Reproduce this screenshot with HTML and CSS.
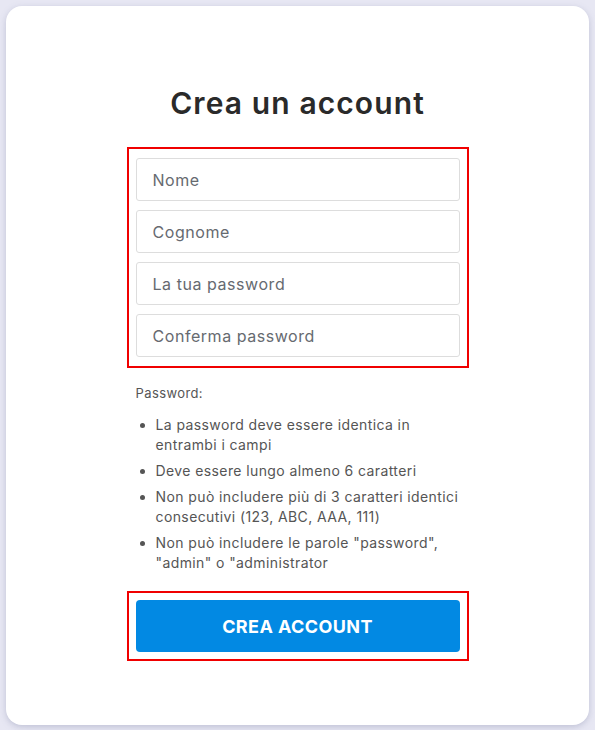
FILE: index.html
```html
<!DOCTYPE html>
<html lang="it">
<head>
    <meta charset="UTF-8">
    <meta name="viewport" content="width=device-width, initial-scale=1.0">
    <title>Crea un account</title>
    <link rel="stylesheet" href="styles.css">
</head>
<body>
    <div class="card">
        <h1>Crea un account</h1>

        <form class="signup">
            <div class="fields highlight">
                <input type="text" placeholder="Nome">
                <input type="text" placeholder="Cognome">
                <input type="password" placeholder="La tua password">
                <input type="password" placeholder="Conferma password">
            </div>

            <div class="rules">
                <p>Password:</p>
                <ul>
                    <li>La password deve essere identica in entrambi i campi</li>
                    <li>Deve essere lungo almeno 6 caratteri</li>
                    <li>Non può includere più di 3 caratteri identici consecutivi (123, ABC, AAA, 111)</li>
                    <li>Non può includere le parole "password", "admin" o "administrator</li>
                </ul>
            </div>

            <div class="actions highlight">
                <button type="button">Crea account</button>
            </div>
        </form>
    </div>
</body>
</html>
```

FILE: styles.css
```css
* {
    box-sizing: border-box;
}

body {
    font-family: Inter, "Open Sans", sans-serif;
    margin: 0;
    padding: 6px;
    background-color: #e7e7f3;
}

.card {
    background-color: white;
    border-radius: 16px;
    height: 719px;
    padding-top: 79px;
    box-shadow: 0 2px 6px rgba(120, 125, 160, 0.35);
}

h1 {
    margin: 0 0 26px;
    text-align: center;
    font-size: 30px;
    line-height: 36px;
    font-weight: 600;
    letter-spacing: 1.1px;
    color: #2a2a2a;
}

.signup {
    width: 342px;
    margin: 0 auto;
}

.highlight {
    border: 2px solid #f00000;
    padding: 9px 7px;
}

.fields {
    display: flex;
    flex-direction: column;
    gap: 9px;
}

input {
    height: 43px;
    border: 1px solid #dddddd;
    border-radius: 3px;
    padding: 0 16px;
    font-family: inherit;
    font-size: 16px;
    letter-spacing: 0.55px;
    color: #333;
}

input::placeholder {
    color: #666a70;
}

.rules {
    padding: 0 9px;
    color: #555;
}

.rules p {
    margin: 17px 0 14px;
    font-size: 13px;
    letter-spacing: 0.4px;
}

.rules ul {
    margin: 0 0 18px;
    padding-left: 20px;
    font-size: 14px;
    line-height: 20px;
    letter-spacing: 0.4px;
}

.rules li {
    margin-bottom: 6px;
}

.actions {
    padding: 7px;
}

button {
    width: 100%;
    height: 52px;
    border: none;
    border-radius: 4px;
    background-color: #0289e3;
    color: white;
    font-family: inherit;
    font-size: 18px;
    font-weight: 700;
    text-transform: uppercase;
    letter-spacing: 0.4px;
    cursor: pointer;
}
```
